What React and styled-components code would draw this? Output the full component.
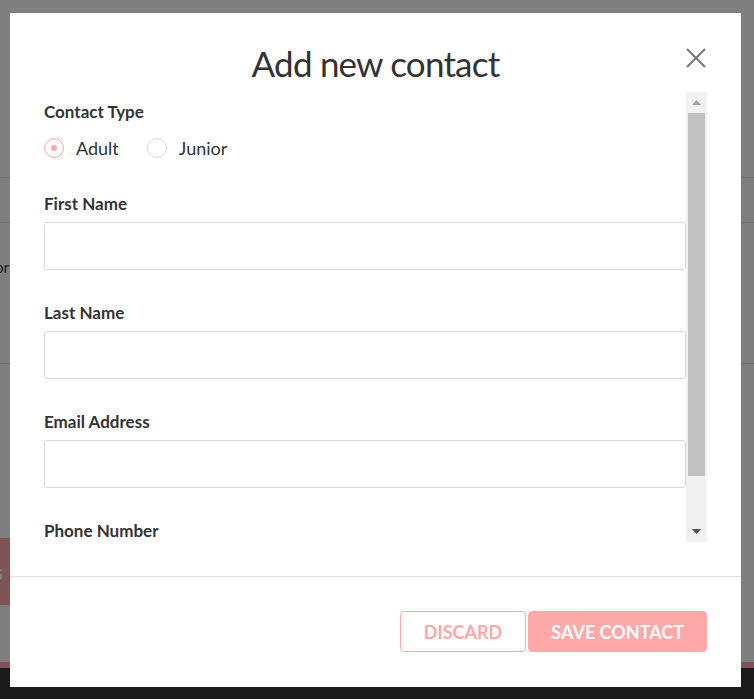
import React, { useState } from "react";
import styled, { createGlobalStyle } from "styled-components";

const pink = "#ffa8a8";

const GlobalStyle = createGlobalStyle`
  html, body {
    margin: 0;
    padding: 0;
    height: 100%;
  }
  body {
    font-family: Lato, "Open Sans", "Liberation Sans", sans-serif;
    background: #ffffff;
    overflow: hidden;
  }
  * {
    box-sizing: border-box;
  }
`;

const fields = ["First Name", "Last Name", "Email Address", "Phone Number", "Notes"];

const App = () => {
  const [type, setType] = useState("adult");

  return (
    <>
      <GlobalStyle />
      <Page>
        <PageTop />
        <PageRow height={45} />
        <PageRow height={141}>
          <ClipCell>
            <RowText>Vendor</RowText>
          </ClipCell>
        </PageRow>
        <PageRow height={69} />
        <PageGap height={106} />
        <ClipCell>
          <PageButton>Add contacts</PageButton>
        </ClipCell>
        <PageGap height={57} />
        <PageBar />
        <PageFooter />
      </Page>
      <Overlay />

      <Modal>
        <Header>
          <Title>Add new contact</Title>
          <CloseButton aria-label="Close">
            <svg width="20" height="20" viewBox="0 0 20 20">
              <path d="M1 1 L19 19 M19 1 L1 19" stroke="#777" strokeWidth="2" fill="none" />
            </svg>
          </CloseButton>
        </Header>

        <Body>
          <Content>
            <Label>Contact Type</Label>
            <RadioRow>
              <RadioOption onClick={() => setType("adult")}>
                <RadioCircle checked={type === "adult"} />
                Adult
              </RadioOption>
              <RadioOption onClick={() => setType("junior")}>
                <RadioCircle checked={type === "junior"} />
                Junior
              </RadioOption>
            </RadioRow>

            {fields.map((name) => (
              <Field key={name}>
                <Label>{name}</Label>
                <Input type="text" />
              </Field>
            ))}
          </Content>

          <Scrollbar>
            <ScrollButton>
              <svg width="9" height="5" viewBox="0 0 9 5">
                <path d="M4.5 0 L9 5 L0 5 Z" fill="#a3a3a3" />
              </svg>
            </ScrollButton>
            <ScrollTrack>
              <ScrollThumb />
            </ScrollTrack>
            <ScrollButton>
              <svg width="9" height="5" viewBox="0 0 9 5">
                <path d="M0 0 L9 0 L4.5 5 Z" fill="#505050" />
              </svg>
            </ScrollButton>
          </Scrollbar>
        </Body>

        <Footer>
          <OutlineButton>Discard</OutlineButton>
          <SolidButton>Save contact</SolidButton>
        </Footer>
      </Modal>
    </>
  );
};

export default App;

/* page behind the dialog */

const Page = styled.div`
  display: flex;
  flex-direction: column;
  height: 100vh;
  background: #ffffff;
`;

const PageTop = styled.div`
  height: 177px;
  flex-shrink: 0;
`;

const PageRow = styled.div`
  height: ${(props) => props.height}px;
  flex-shrink: 0;
  border-top: 1px solid #e0e0e0;
  padding-top: 34px;
  display: flex;
  align-items: flex-start;
`;

const PageGap = styled.div`
  height: ${(props) => props.height}px;
  flex-shrink: 0;
`;

const ClipCell = styled.div`
  width: 10px;
  overflow: hidden;
  display: flex;
  justify-content: flex-end;
  white-space: nowrap;
  flex-shrink: 0;
`;

const RowText = styled.span`
  font-size: 15px;
  line-height: 20px;
  color: #383838;
  margin-right: 1px;
`;

const PageButton = styled.div`
  height: 67px;
  padding: 0 7px 0 20px;
  background: ${pink};
  color: #ffffff;
  font-weight: 700;
  font-size: 20px;
  display: flex;
  align-items: center;
  border-radius: 4px 0 0 4px;
`;

const PageBar = styled.div`
  height: 6px;
  flex-shrink: 0;
  background: ${pink};
`;

const PageFooter = styled.div`
  flex: 1;
  background: #343434;
`;

const Overlay = styled.div`
  position: fixed;
  inset: 0;
  background: rgba(0, 0, 0, 0.5);
`;

/* dialog */

const Modal = styled.div`
  position: fixed;
  left: 10px;
  top: 13px;
  width: 731px;
  height: 674px;
  background: #ffffff;
  display: flex;
  flex-direction: column;
`;

const Header = styled.div`
  position: relative;
  height: 79px;
  padding-top: 28px;
  flex-shrink: 0;
`;

const Title = styled.h2`
  margin: 0;
  font-size: 35px;
  line-height: 44px;
  letter-spacing: -0.8px;
  font-weight: 400;
  color: #333333;
  text-align: center;
`;

const CloseButton = styled.button`
  position: absolute;
  top: 35px;
  right: 35px;
  width: 20px;
  height: 20px;
  padding: 0;
  border: none;
  background: none;
  cursor: pointer;
  display: flex;
  svg {
    display: block;
  }
`;

const Body = styled.div`
  display: flex;
  height: 450px;
  margin: 0 34px;
  flex-shrink: 0;
`;

const Content = styled.div`
  flex: 1;
  overflow: hidden;
  padding-top: 10px;
`;

const Label = styled.div`
  font-size: 17px;
  line-height: 20px;
  font-weight: 700;
  color: #333333;
  margin-bottom: 8px;
`;

const RadioRow = styled.div`
  display: flex;
  gap: 28px;
  margin-top: 16px;
  margin-bottom: 36px;
`;

const RadioOption = styled.label`
  display: flex;
  align-items: center;
  gap: 12px;
  font-size: 18px;
  line-height: 20px;
  color: #333333;
  cursor: pointer;
`;

const RadioCircle = styled.span`
  width: 20px;
  height: 20px;
  border-radius: 50%;
  border: 1px solid ${(props) => (props.checked ? pink : "#d4d8dc")};
  display: flex;
  align-items: center;
  justify-content: center;
  &::after {
    content: "";
    width: 6px;
    height: 6px;
    border-radius: 50%;
    background: ${(props) => (props.checked ? pink : "transparent")};
  }
`;

const Field = styled.div`
  margin-bottom: 33px;
`;

const Input = styled.input`
  display: block;
  width: 100%;
  height: 48px;
  border: 1px solid #d9d9d9;
  border-radius: 3px;
  padding: 0 12px;
  font: inherit;
  font-size: 16px;
  outline: none;
`;

const Scrollbar = styled.div`
  width: 21px;
  background: #f1f1f1;
  display: flex;
  flex-direction: column;
`;

const ScrollButton = styled.div`
  height: 21px;
  display: flex;
  align-items: center;
  justify-content: center;
  svg {
    display: block;
  }
`;

const ScrollTrack = styled.div`
  flex: 1;
`;

const ScrollThumb = styled.div`
  height: 363px;
  margin: 0 2px;
  background: #c1c1c1;
`;

const Footer = styled.div`
  margin-top: 34px;
  border-top: 1px solid #e0e0e0;
  padding: 34px 34px 0;
  display: flex;
  justify-content: flex-end;
  gap: 2px;
`;

const ButtonBase = styled.button`
  height: 41px;
  padding: 0 ${(props) => props.pad || 23}px;
  border-radius: 4px;
  font-family: inherit;
  font-size: 18px;
  font-weight: 700;
  text-transform: uppercase;
  cursor: pointer;
`;

const OutlineButton = styled(ButtonBase)`
  background: #ffffff;
  border: 1px solid ${pink};
  color: ${pink};
`;

const SolidButton = styled(ButtonBase).attrs({ pad: 22 })`
  background: ${pink};
  border: 1px solid ${pink};
  color: #ffffff;
`;
